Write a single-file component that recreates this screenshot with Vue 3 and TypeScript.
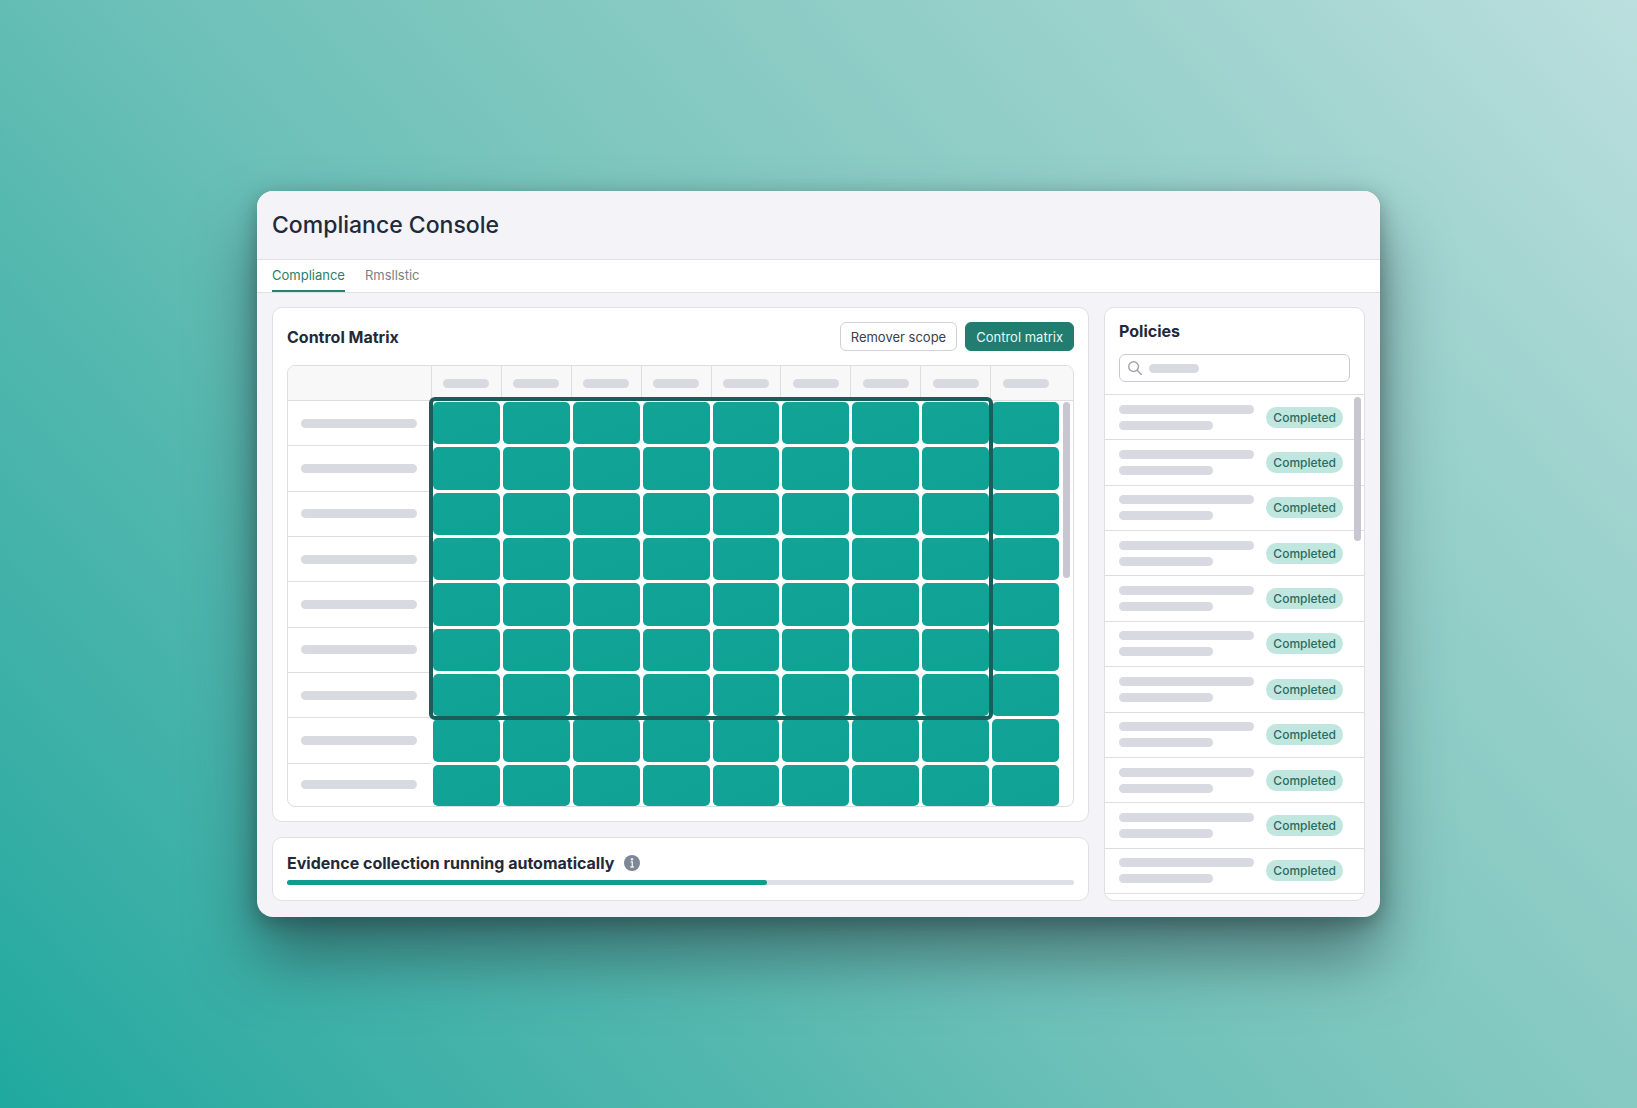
<script setup lang="ts">
import { ref } from 'vue'

interface Tab {
  id: string
  label: string
}

const tabs: Tab[] = [
  { id: 'compliance', label: 'Compliance' },
  { id: 'rmsllstic', label: 'Rmsllstic' },
]

const activeTab = ref('compliance')
const query = ref('')
const progress = 61

const columns = Array.from({ length: 9 }, (_, i) => i)
const rows = Array.from({ length: 9 }, (_, i) => i)
const policies = Array.from({ length: 11 }, (_, i) => ({ id: i, status: 'Completed' }))
</script>

<template>
  <div class="backdrop">
    <main class="console">
      <header class="console-header">
        <h1>Compliance Console</h1>
      </header>

      <nav class="tabs" aria-label="Sections">
        <a
          v-for="tab in tabs"
          :key="tab.id"
          :href="`#${tab.id}`"
          class="tab"
          :class="{ active: activeTab === tab.id }"
          @click.prevent="activeTab = tab.id"
        >{{ tab.label }}</a>
      </nav>

      <div class="content">
        <div class="main-column">
          <section class="card matrix-card">
            <div class="matrix-head">
              <h2>Control Matrix</h2>
              <div class="actions">
                <button type="button" class="btn">Remover scope</button>
                <button type="button" class="btn primary">Control matrix</button>
              </div>
            </div>

            <div class="matrix">
              <table class="matrix-table" aria-label="Control matrix">
                <thead>
                  <tr class="matrix-row head-row">
                    <th scope="col" class="corner"></th>
                    <th v-for="c in columns" :key="c" scope="col" class="col-head">
                      <span class="bar"></span>
                    </th>
                    <th class="gutter"></th>
                  </tr>
                </thead>
                <tbody>
                  <tr v-for="r in rows" :key="r" class="matrix-row body-row">
                    <th scope="row" class="row-head"><span class="bar"></span></th>
                    <td v-for="c in columns" :key="c" class="slot"><span class="cell"></span></td>
                    <td class="gutter"></td>
                  </tr>
                </tbody>
              </table>
              <div class="selection"></div>
              <div class="thumb matrix-thumb"></div>
            </div>
          </section>

          <section class="card evidence-card">
            <div class="evidence-title">
              <h2>Evidence collection running automatically</h2>
              <svg class="info" viewBox="0 0 16 16" aria-hidden="true">
                <circle cx="8" cy="8" r="8" fill="#7d8795" />
                <circle cx="8" cy="4.2" r="1.2" fill="#f1f3f5" />
                <path d="M6.6 6.9h1.7v5M6.4 12h3.4" fill="none" stroke="#f1f3f5" stroke-width="1.3" />
              </svg>
            </div>
            <div class="track" role="progressbar" :aria-valuenow="progress" aria-valuemin="0" aria-valuemax="100">
              <div class="fill" :style="{ width: progress + '%' }"></div>
            </div>
          </section>
        </div>

        <aside class="card policies-card">
          <div class="policies-head">
            <h2>Policies</h2>
            <label class="search">
              <svg viewBox="0 0 14 14" class="search-icon" aria-hidden="true">
                <circle cx="5.6" cy="5.6" r="4.9" />
                <path d="M9.2 9.2l4.2 4.2" />
              </svg>
              <span v-if="!query" class="bar search-bar"></span>
              <input v-model="query" type="search" aria-label="Search policies" />
            </label>
          </div>
          <ul class="policy-list">
            <li v-for="p in policies" :key="p.id" class="policy">
              <div class="policy-lines">
                <span class="bar long"></span>
                <span class="bar short"></span>
              </div>
              <span class="badge">{{ p.status }}</span>
            </li>
          </ul>
          <div class="thumb policies-thumb"></div>
        </aside>
      </div>
    </main>
  </div>
</template>

<style>
body {
  margin: 0;
}
</style>

<style scoped>
.backdrop {
  box-sizing: border-box;
  min-height: 100vh;
  padding: 24px;
  display: flex;
  align-items: center;
  justify-content: center;
  font-family: Inter, "Liberation Sans", sans-serif;
  color: #232938;
  background: linear-gradient(
    48deg,
    #1fa99f 0%,
    #36aea5 11%,
    #54b8af 30%,
    #6bc0b8 42%,
    #84c9c1 60%,
    #9cd2cd 80%,
    #bbdfde 100%
  );
}

.backdrop *,
.backdrop *::before {
  box-sizing: border-box;
}

h1,
h2 {
  margin: 0;
}

h1 {
  font-size: 23px;
  line-height: 28px;
  font-weight: 500;
}

h2 {
  font-size: 16px;
  line-height: 20px;
  font-weight: 650;
}

.console {
  width: 100%;
  max-width: 1123px;
  border-radius: 16px;
  overflow: hidden;
  background: #f4f4f8;
  box-shadow:
    0 6px 20px rgba(30, 45, 50, 0.4),
    0 40px 64px rgba(35, 50, 55, 0.54);
}

.console-header {
  padding: 20px 15px;
  border-bottom: 1px solid #dfe0e5;
  background: #f3f3f8;
}

.tabs {
  display: flex;
  gap: 20px;
  padding: 0 15px;
  background: #fff;
  border-bottom: 1px solid #dfe0e5;
}

.tab {
  padding: 6px 0 5px;
  border-bottom: 2px solid transparent;
  font-size: 13px;
  line-height: 19px;
  color: #7d7f84;
  text-decoration: none;
}

.tab.active {
  color: #2b8168;
  border-bottom-color: #2a806e;
}

.content {
  display: flex;
  gap: 15px;
  padding: 14px 15px 16px;
}

.card {
  background: #fff;
  border: 1px solid #dfdfe5;
  border-radius: 10px;
}

.main-column {
  flex: 1;
  min-width: 0;
  display: flex;
  flex-direction: column;
  gap: 15px;
}

.matrix-card {
  padding: 14px;
}

.matrix-head {
  display: flex;
  align-items: center;
  justify-content: space-between;
  margin-bottom: 14px;
}

.actions {
  display: flex;
  gap: 8px;
}

.btn {
  height: 29px;
  padding: 0 10px;
  border: 1px solid #d0d2d7;
  border-radius: 6px;
  background: #fff;
  color: #3b404b;
  font-family: inherit;
  font-size: 13px;
  font-weight: 400;
  line-height: 16px;
}

.btn.primary {
  border-color: #217d70;
  background: #217d70;
  color: #e8f7f4;
}

.bar {
  display: block;
  height: 9px;
  border-radius: 5px;
  background: #d9d9e1;
}

.matrix {
  position: relative;
  height: 442px;
}

.matrix-table {
  display: flex;
  flex-direction: column;
  height: 100%;
  border: 1px solid #dddee2;
  border-radius: 8px;
  overflow: hidden;
}

.matrix-table thead {
  display: block;
}

/* The last row is slightly shorter: it meets the bottom edge of the frame. */
.matrix-table tbody {
  flex: 1;
  display: grid;
  grid-template-rows: repeat(8, 16fr) 15fr;
}

.matrix-row {
  display: grid;
  grid-template-columns: 143px repeat(9, 1fr) 13px;
}

.matrix-row th,
.matrix-row td {
  padding: 0;
}

.head-row {
  height: 35px;
  background: #f8f8f9;
  border-bottom: 1px solid #dddee2;
}

.col-head {
  display: flex;
  align-items: center;
  justify-content: center;
  border-left: 1px solid #dddee2;
}

.col-head .bar {
  width: 46px;
}

.row-head {
  display: flex;
  align-items: center;
  border-bottom: 1px solid #dddee2;
}

.matrix-row .row-head {
  padding: 0 14px 0 13px;
}

.body-row:last-child .row-head {
  border-bottom: 0;
}

.row-head .bar {
  width: 100%;
}

.matrix-row .slot {
  padding: 1px 1px 2px 2px;
}

.body-row:last-child .slot {
  padding-bottom: 0;
}

.cell {
  display: block;
  height: 100%;
  border-radius: 5px;
  background: linear-gradient(160deg, #12a597, #0fa194);
}

/* Frames the first eight columns and seven rows of the grid. */
.selection {
  position: absolute;
  top: 32px;
  left: 142px;
  right: 81px;
  height: 323px;
  border: 4px solid #17605a;
  border-radius: 6px;
}

.thumb {
  position: absolute;
  width: 7px;
  border-radius: 4px;
  background: #c8c7d1;
}

.matrix-thumb {
  top: 37px;
  right: 4px;
  height: 176px;
}

.evidence-card {
  padding: 15px 14px;
}

.evidence-title {
  display: flex;
  align-items: center;
  gap: 10px;
  margin-bottom: 7px;
}

.info {
  width: 16px;
  height: 16px;
}

.track {
  height: 5px;
  border-radius: 3px;
  background: #dedfe4;
}

.fill {
  height: 100%;
  border-radius: 3px;
  background: #109d8f;
}

.policies-card {
  position: relative;
  width: 261px;
  overflow: hidden;
}

.policies-head {
  padding: 13px 14px 12px;
  border-bottom: 1px solid #dddee2;
}

.search {
  display: flex;
  align-items: center;
  gap: 7px;
  height: 28px;
  margin-top: 13px;
  padding: 0 8px;
  border: 1px solid #cbccd1;
  border-radius: 6px;
}

.search-icon {
  width: 14px;
  height: 14px;
  fill: none;
  stroke: #a2a4ac;
  stroke-width: 1.4;
  stroke-linecap: round;
}

.search-bar {
  width: 50px;
}

.search input {
  flex: 1;
  min-width: 0;
  padding: 0;
  border: 0;
  outline: 0;
  background: transparent;
  font-family: inherit;
  font-size: 13px;
}

.policy-list {
  display: grid;
  grid-template-rows: repeat(11, 1fr);
  height: 499px;
  margin: 0;
  padding: 0;
  list-style: none;
}

.policy {
  display: flex;
  align-items: center;
  justify-content: space-between;
  padding: 0 21px 0 14px;
  border-bottom: 1px solid #dddee2;
}

.policy-lines {
  display: grid;
  gap: 7px;
}

.long {
  width: 135px;
}

.short {
  width: 94px;
}

.badge {
  padding: 0 7px;
  border-radius: 11px;
  background: #c0e7df;
  color: #2b6b62;
  font-size: 12px;
  line-height: 21px;
  font-weight: 500;
}

.policies-thumb {
  top: 89px;
  right: 3px;
  height: 144px;
}
</style>
